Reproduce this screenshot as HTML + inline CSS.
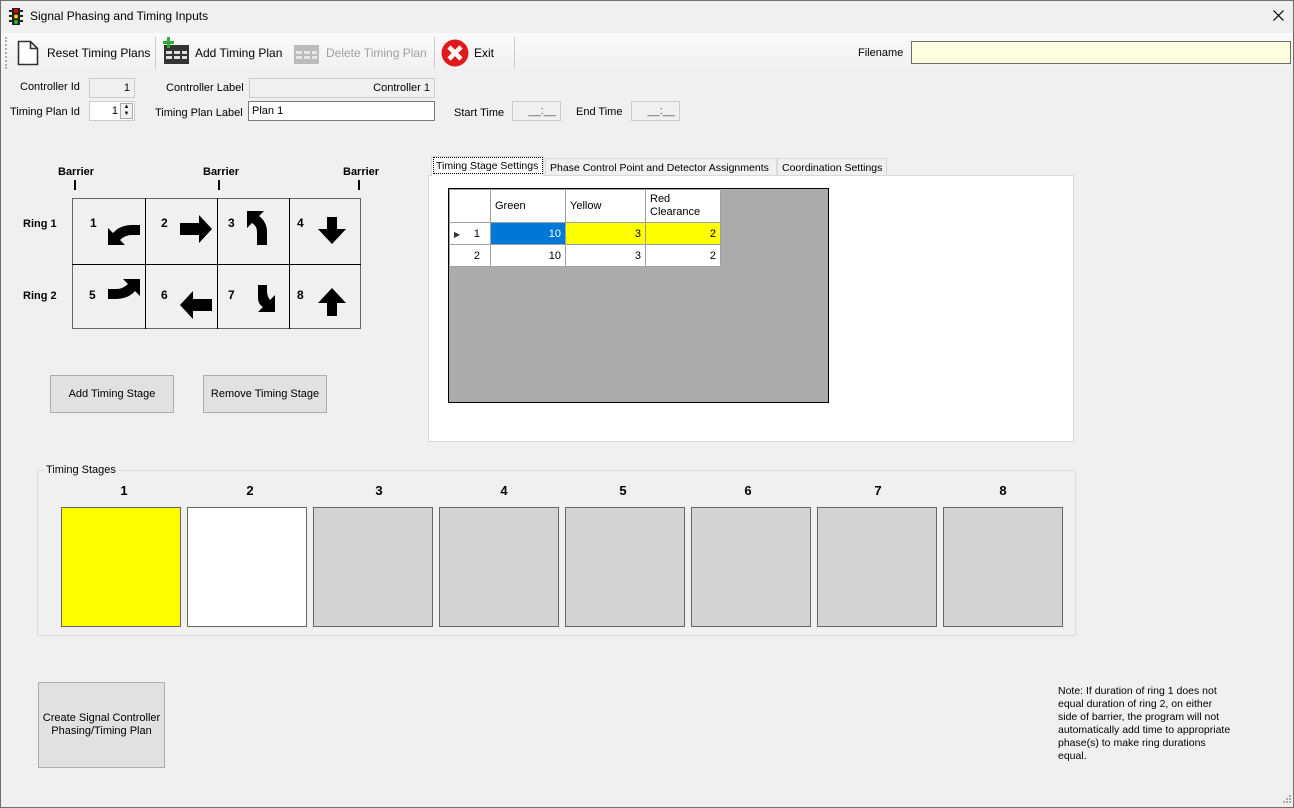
<!DOCTYPE html>
<html><head><meta charset="utf-8"><style>
*{box-sizing:border-box;margin:0;padding:0}
body{width:1294px;height:808px;overflow:hidden;background:#f0f0f0;font-family:"Liberation Sans",sans-serif;font-size:11px;color:#000;position:relative}
div{white-space:nowrap}
.a{position:absolute}
.frame{position:absolute;left:0;top:0;width:1294px;height:808px;border:1px solid #6d6d6d;pointer-events:none}
.tb{position:absolute;left:1px;top:33px;width:1292px;height:38px;background:linear-gradient(#fafafa,#f0f0f0)}
.sep{position:absolute;top:37px;width:1px;height:32px;background:#ccc}
.box{position:absolute;border:1px solid #ccc;background:#f0f0f0;text-align:right;padding:3px 4px;font-size:11px}
.inp{position:absolute;border:1px solid #7a7a7a;background:#fff;padding:3px 3px;font-size:11px}
.lbl{position:absolute;font-size:11px}
.btn{position:absolute;border:1px solid #adadad;background:#e1e1e1;text-align:center;font-size:11px;display:flex;align-items:center;justify-content:center}
.num{position:absolute;font-weight:bold;font-size:12px}
.b{font-weight:bold}
table{border-collapse:collapse}
td{border:1px solid #a0a0a0;font-size:11px;padding:0 4px}
.st{position:absolute;top:507px;width:120px;height:120px;border:1px solid #666;background:#d3d3d3}
.sn{position:absolute;top:483px;width:120px;text-align:center;font-weight:bold;font-size:13px}
</style></head><body>
<div class="frame"></div>
<svg class="a" style="left:9px;top:8px" width="14" height="18" viewBox="0 0 14 18"><rect x="3" y="0" width="8" height="17" fill="#222"/><rect x="0" y="2" width="14" height="2" fill="#222"/><rect x="0" y="7" width="14" height="2" fill="#222"/><rect x="0" y="12" width="14" height="2" fill="#222"/><circle cx="7" cy="3" r="2" fill="#e00"/><circle cx="7" cy="8.5" r="2" fill="#ec0"/><circle cx="7" cy="14" r="2" fill="#2b2"/></svg>
<div class="lbl" style="left:30px;top:9px;font-size:12px">Signal Phasing and Timing Inputs</div>
<svg class="a" style="left:1273px;top:10px" width="11" height="11"><path d="M0.5 0.5L10.5 10.5M10.5 0.5L0.5 10.5" stroke="#000" stroke-width="1.2"/></svg>
<div class="tb"></div>
<div class="a" style="left:5px;top:37px;width:2px;height:32px;border-left:2px dotted #aaa"></div>
<svg class="a" style="left:17px;top:40px" width="22" height="26" viewBox="0 0 22 26"><path d="M1.5 1.5h12l7 7v16h-19z M13.5 1.5v7h7" fill="#fff" stroke="#333" stroke-width="1.6"/></svg>
<div class="lbl" style="left:47px;top:46px;font-size:12px">Reset Timing Plans</div>
<div class="sep" style="left:155px"></div>
<svg class="a" style="left:162px;top:37px" width="28" height="28" viewBox="0 0 28 28"><rect x="2" y="8" width="25" height="19" fill="#333"/><g fill="#ddd"><rect x="4" y="14" width="6" height="3"/><rect x="12" y="14" width="6" height="3"/><rect x="20" y="14" width="5" height="3"/><rect x="4" y="19" width="6" height="3"/><rect x="12" y="19" width="6" height="3"/><rect x="20" y="19" width="5" height="3"/></g><path d="M5 0h3v4h4v3H8v4H5V7H1V4h4z" fill="#3a3"/></svg>
<div class="lbl" style="left:195px;top:46px;font-size:12px">Add Timing Plan</div>
<svg class="a" style="left:292px;top:37px" width="28" height="28" viewBox="0 0 28 28"><rect x="2" y="8" width="25" height="19" fill="#bbb"/><g fill="#e6e6e6"><rect x="4" y="14" width="6" height="3"/><rect x="12" y="14" width="6" height="3"/><rect x="20" y="14" width="5" height="3"/><rect x="4" y="19" width="6" height="3"/><rect x="12" y="19" width="6" height="3"/><rect x="20" y="19" width="5" height="3"/></g></svg>
<div class="lbl" style="left:326px;top:46px;color:#a0a0a0;font-size:12px">Delete Timing Plan</div>
<div class="sep" style="left:434px"></div>
<svg class="a" style="left:441px;top:39px" width="28" height="28" viewBox="0 0 28 28"><circle cx="14" cy="14" r="13.5" fill="#e0191c"/><path d="M8 8L20 20M20 8L8 20" stroke="#fff" stroke-width="4.5"/></svg>
<div class="lbl" style="left:474px;top:46px;font-size:12px">Exit</div>
<div class="sep" style="left:514px"></div>
<div class="lbl" style="left:858px;top:47px">Filename</div>
<div class="a" style="left:911px;top:41px;width:380px;height:23px;background:#ffffe0;border:1px solid #6d6d6d"></div>
<div class="lbl" style="left:20px;top:81px">Controller Id</div>
<div class="box" style="left:89px;top:78px;width:46px;height:20px">1</div>
<div class="lbl" style="left:166px;top:82px">Controller Label</div>
<div class="box" style="left:249px;top:78px;width:186px;height:20px">Controller 1</div>
<div class="lbl" style="left:10px;top:106px">Timing Plan Id</div>
<div class="inp" style="left:89px;top:101px;width:46px;height:20px;text-align:right;padding-right:16px;border-color:#ccc">1</div>
<div class="a" style="left:120px;top:103px;width:13px;height:16px;border:1px solid #aaa;background:#f0f0f0;font-size:6px;line-height:7px;text-align:center">▲<br>▼</div>
<div class="lbl" style="left:155px;top:107px">Timing Plan Label</div>
<div class="inp" style="left:248px;top:101px;width:187px;height:20px">Plan 1</div>
<div class="lbl" style="left:454px;top:107px">Start Time</div>
<div class="box" style="left:512px;top:101px;width:49px;height:20px;color:#555">__:__</div>
<div class="lbl" style="left:576px;top:106px">End Time</div>
<div class="box" style="left:631px;top:101px;width:49px;height:20px;color:#555">__:__</div>
<div class="lbl b" style="left:58px;top:166px">Barrier</div>
<div class="lbl b" style="left:203px;top:166px">Barrier</div>
<div class="lbl b" style="left:343px;top:166px">Barrier</div>
<div class="a" style="left:74px;top:180px;width:2px;height:10px;background:#000"></div>
<div class="a" style="left:218px;top:180px;width:2px;height:10px;background:#000"></div>
<div class="a" style="left:358px;top:180px;width:2px;height:10px;background:#000"></div>
<div class="lbl b" style="left:23px;top:218px">Ring 1</div>
<div class="lbl b" style="left:23px;top:290px">Ring 2</div>
<div class="a" style="left:72px;top:198px;width:289px;height:131px;border:1px solid #666"></div>
<div class="a" style="left:145px;top:198px;width:1px;height:131px;background:#000"></div>
<div class="a" style="left:217px;top:198px;width:1px;height:131px;background:#000"></div>
<div class="a" style="left:289px;top:198px;width:1px;height:131px;background:#000"></div>
<div class="a" style="left:72px;top:264px;width:289px;height:1px;background:#000"></div>
<div class="num" style="left:90px;top:216px">1</div>
<div class="num" style="left:161px;top:216px">2</div>
<div class="num" style="left:228px;top:216px">3</div>
<div class="num" style="left:297px;top:216px">4</div>
<div class="num" style="left:89px;top:288px">5</div>
<div class="num" style="left:161px;top:288px">6</div>
<div class="num" style="left:228px;top:288px">7</div>
<div class="num" style="left:297px;top:288px">8</div>
<svg class="a" style="left:0;top:0" width="380" height="340">
<g fill="#000">
<path d="M140 225v10h-8q-7 0-12 5l5 5h-17v-17l5 5q7-8 19-8z"/>
<path d="M180 223h19v-8l13 14-13 14v-8h-19z"/>
<path d="M257 245v-13q0-6-5-9l-5 5v-17h17l-5 5q8 6 8 16v13z"/>
<path d="M327 217h10v12h9l-14 15-14-15h9z"/>
<path d="M108 299v-10h8q7 0 12-5l-5-5h17v17l-5-5q-7 8-19 8z"/>
<path d="M212 299h-19v-8l-13 14 13 14v-8h19z"/>
<path d="M258 285v13q0 6 5 9l-5 5h17v-17l-5 5q-3-4-3-9v-6z"/>
<path d="M327 316h10v-13h9l-14-15-14 15h9z"/>
</g></svg>
<div class="btn" style="left:50px;top:375px;width:124px;height:38px">Add Timing Stage</div>
<div class="btn" style="left:203px;top:375px;width:124px;height:38px">Remove Timing Stage</div>
<div class="a" style="left:428px;top:175px;width:646px;height:267px;background:#fff;border:1px solid #d9d9d9"></div>
<div class="a" style="left:431px;top:156px;width:113px;height:20px;background:#fff;border:1px solid #d9d9d9;border-bottom:none"></div>
<div class="a" style="left:433px;top:157px;width:110px;height:17px;border:1px dotted #000;padding:2px 2px;font-size:10.5px">Timing Stage Settings</div>
<div class="a" style="left:545px;top:158px;width:232px;height:18px;border:1px solid #d9d9d9;background:#f0f0f0;padding:3px 4px;font-size:10.5px">Phase Control Point and Detector Assignments</div>
<div class="a" style="left:777px;top:158px;width:110px;height:18px;border:1px solid #d9d9d9;background:#f0f0f0;padding:3px 4px;font-size:10.5px">Coordination Settings</div>
<div class="a" style="left:448px;top:188px;width:381px;height:215px;background:#ababab;border:1px solid #000"></div>
<table class="a" style="left:449px;top:189px;background:#fff">
<tr style="height:33px"><td style="width:41px"></td><td style="width:75px">Green</td><td style="width:80px">Yellow</td><td style="width:75px;line-height:13px">Red<br>Clearance</td></tr>
<tr style="height:22px"><td style="text-align:right;padding-right:10px"><span style="font-size:8px;float:left;padding-top:2px;color:#333">▶</span>1</td><td style="background:#0078d7;color:#fff;text-align:right">10</td><td style="background:#ff0;text-align:right">3</td><td style="background:#ff0;text-align:right">2</td></tr>
<tr style="height:22px"><td style="text-align:right;padding-right:10px">2</td><td style="text-align:right">10</td><td style="text-align:right">3</td><td style="text-align:right">2</td></tr>
</table>
<div class="a" style="left:37px;top:470px;width:1039px;height:166px;border:1px solid #dcdcdc"></div>
<div class="lbl" style="left:44px;top:464px;background:#f0f0f0;padding:0 2px">Timing Stages</div>
<div class="sn" style="left:64px">1</div><div class="sn" style="left:190px">2</div><div class="sn" style="left:319px">3</div><div class="sn" style="left:444px">4</div><div class="sn" style="left:563px">5</div><div class="sn" style="left:688px">6</div><div class="sn" style="left:818px">7</div><div class="sn" style="left:943px">8</div>
<div class="st" style="left:61px;background:#ff0"></div>
<div class="st" style="left:187px;background:#fff"></div>
<div class="st" style="left:313px"></div><div class="st" style="left:439px"></div><div class="st" style="left:565px"></div><div class="st" style="left:691px"></div><div class="st" style="left:817px"></div><div class="st" style="left:943px"></div>
<div class="btn" style="left:38px;top:682px;width:127px;height:86px;line-height:13px">Create Signal Controller<br>Phasing/Timing Plan</div>
<div class="lbl" style="left:1058px;top:685px;width:176px;font-size:10.5px;line-height:13px;white-space:normal">Note: If duration of ring 1 does not equal duration of ring 2, on either side of barrier, the program will not automatically add time to appropriate phase(s) to make ring durations equal.</div>
<svg class="a" style="left:1280px;top:794px" width="12" height="12"><g fill="#aaa"><rect x="9" y="1" width="2" height="2"/><rect x="6" y="4" width="2" height="2"/><rect x="9" y="4" width="2" height="2"/><rect x="3" y="7" width="2" height="2"/><rect x="6" y="7" width="2" height="2"/><rect x="9" y="7" width="2" height="2"/></g></svg>
</body></html>
